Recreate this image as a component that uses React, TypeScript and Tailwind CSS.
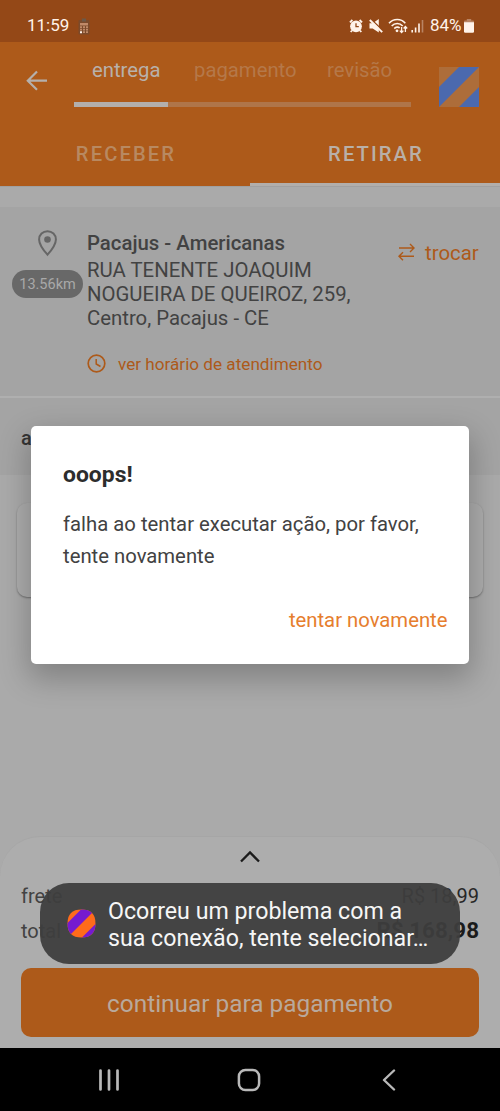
import type { ReactNode } from "react"

function StatusBar() {
  return (
    <div className="flex h-[42px] items-center bg-[#944817] pl-[27px] pr-[26px] pt-[10px] text-[17px] text-[#fff3ea]">
      <span className="w-[42px] whitespace-nowrap">11:59</span>
      <svg className="ml-[9px]" width="12" height="17" viewBox="0 0 12 17" aria-hidden>
        <rect x="0.5" y="2" width="11" height="14.5" rx="1" fill="#7b4a2b" />
        <rect x="4" y="0.5" width="4" height="3" fill="#6b5848" />
        <rect x="2" y="5" width="8" height="2.5" fill="#c08a68" />
        <path d="M2 9.2h2M5 9.2h2M8 9.2h2M2 11.7h2M5 11.7h2M8 11.7h2M5 14.2h2M8 14.2h2" stroke="#c08a68" strokeWidth="1.8" />
        <path d="M2 13.2h2v2H2z" fill="#fff3ea" />
      </svg>

      <div className="ml-auto flex items-center">
        <svg width="14" height="14" viewBox="0 0 14 14" aria-hidden>
          <circle cx="7" cy="7.3" r="5.9" fill="#fff3ea" />
          <path d="M0.9 3.3 3.4 1M13.1 3.3 10.6 1M3 11.5 1.7 13M11 11.5l1.3 1.5" stroke="#fff3ea" strokeWidth="1.8" />
          <path d="M7 4.3v3.4h2.8" fill="none" stroke="#944817" strokeWidth="1.3" />
        </svg>
        <svg className="ml-[6px]" width="14" height="14" viewBox="0 0 14 14" aria-hidden>
          <path d="M0.5 4.3h3.2L9.8 0v13.4L3.7 9.6H0.5z" fill="#fff3ea" />
          <path d="M1.8 0 14 11.8" stroke="#944817" strokeWidth="1.5" />
          <path d="M0.8 1 13.2 13.1" stroke="#fff3ea" strokeWidth="1.9" />
        </svg>
        <svg className="ml-[5px]" width="20" height="16" viewBox="0 0 20 16" aria-hidden>
          <g fill="none" stroke="#fff3ea" strokeWidth="1.6">
            <path d="M1 5.2C5.5.2 13 .2 17.3 5.2" />
            <path d="M3.7 8c3-3.4 8-3.4 11 0" />
            <path d="M6.3 10.6c1.6-1.8 4-1.9 5.4-.6" />
          </g>
          <circle cx="9" cy="12.8" r="1.4" fill="#fff3ea" />
          <path d="M13.6 9v5.5M11.8 12.6l1.8 2 1.8-2M17.4 14V8.5M15.6 10.5l1.8-2 1.8 2" fill="none" stroke="#fff3ea" strokeWidth="1.3" />
        </svg>
        <svg className="ml-[3px]" width="13" height="14" viewBox="0 0 13 14" aria-hidden>
          <path d="M1.2 11v2.5M4.6 8.5v5M8 4.5v9" stroke="#fff3ea" strokeWidth="1.6" />
          <path d="M11.5 1v12.5" stroke="#b98463" strokeWidth="1.6" />
        </svg>
        <span className="ml-[6px] w-[32px] whitespace-nowrap">84%</span>
        <svg className="ml-[2px]" width="10" height="14" viewBox="0 0 10 14" aria-hidden>
          <path d="M2.8 0h4.4v1.4H9a1 1 0 0 1 1 1V4H0V2.4a1 1 0 0 1 1-1h1.8z" fill="#b98463" />
          <path d="M0 3.3h10v9.2a1.2 1.2 0 0 1-1.2 1.2H1.2A1.2 1.2 0 0 1 0 12.5z" fill="#fff3ea" />
        </svg>
      </div>
    </div>
  )
}

function Header() {
  return (
    <header className="h-[144px] bg-[#ad5a1a]">
      <div className="flex h-[80px]">
        <svg className="ml-[26px] mt-[28px]" width="22" height="21" viewBox="0 0 22 21" aria-hidden>
          <path d="M21 10.7H2M11 1.5 1.8 10.7 11 19.8" fill="none" stroke="#b5b0ac" strokeWidth="2.2" />
        </svg>
        <div className="ml-[26px] w-[337px]">
          <div className="flex h-[60px] pt-[16px] text-[20.3px] leading-6 text-[#b57849]">
            <span className="ml-[18px] w-[102px] whitespace-nowrap text-[#b8b1ab]">entrega</span>
            <span className="w-[133px] whitespace-nowrap">pagamento</span>
            <span className="whitespace-nowrap">revisão</span>
          </div>
          <div className="h-[5px] bg-[#af7549]">
            <div className="h-full w-[94px] bg-[#b3afac]" />
          </div>
        </div>
        <svg className="ml-[28px] mt-[25px]" width="40" height="40" viewBox="0 0 40 40" aria-hidden>
          <path d="M0 0h40v40H0z" fill="#ad6d3a" />
          <path d="M20 0h20L0 40V20zM40 20v20H20z" fill="#4b69ae" />
        </svg>
      </div>
      <div className="grid h-[64px] grid-cols-2 text-center text-[20.2px] font-medium leading-[61px] tracking-[2.1px]">
        <span className="pl-[2px] pt-[2px] text-[#b88961]">RECEBER</span>
        <span className="h-[64px] border-b-[3px] border-[#b2aeab] pl-[2px] pt-[2px] text-[#b9b0a8]">RETIRAR</span>
      </div>
    </header>
  )
}

function Store() {
  return (
    <section className="flex h-[189px] bg-[#a4a4a4] text-[#424242]">
      <div className="flex w-[87px] flex-col items-start pl-[12px] pt-[23px]">
        <svg className="ml-[26px]" width="19" height="27" viewBox="0 0 19 27" aria-hidden>
          <path
            d="M9.5 1.2C4.8 1.2 1.1 4.8 1.1 9.4c0 5.8 8.4 15.3 8.4 15.3s8.4-9.500 8.400-15.300c0-4.600-3.700-8.200-8.400-8.200z"
            fill="none"
            stroke="#666"
            strokeWidth="2"
          />
          <circle cx="9.5" cy="9.5" r="3.3" fill="#666" />
        </svg>
        <span className="mt-[13px] flex h-7 w-[71px] items-center justify-center rounded-full bg-[#686868] pt-[2px] text-[14.5px] text-[#a9a9a9]">
          13.56km
        </span>
      </div>
      <div className="w-[300px] whitespace-nowrap pt-[24px] text-[20.35px] leading-6">
        <h2 className="mb-[3px] font-medium">Pacajus - Americanas</h2>
        <p>
          RUA TENENTE JOAQUIM
          <br />
          NOGUEIRA DE QUEIROZ, 259,
          <br />
          Centro, Pacajus - CE
        </p>
        <a className="mt-[22px] flex items-center text-[17.15px] text-[#ad5a1a]">
          <svg className="mb-[2px] mr-[12px]" width="19" height="19" viewBox="0 0 19 19" aria-hidden>
            <circle cx="9.5" cy="9.5" r="8.3" fill="none" stroke="#ad5a1a" strokeWidth="1.7" />
            <path d="M9.2 5v5l4.3 2.5" fill="none" stroke="#ad5a1a" strokeWidth="1.5" />
          </svg>
          ver horário de atendimento
        </a>
      </div>
      <a className="mt-[34px] flex h-6 items-center whitespace-nowrap pl-[11px] text-[20.4px] text-[#ad5a1a]">
        <svg className="mb-[3px] mr-[10px]" width="17" height="18" viewBox="0 0 17 18" aria-hidden>
          <path d="M1 5h15M12 1l4 4-4 4M16 13.2H1M5 9.2l-4 4 4 4" fill="none" stroke="#ad5a1a" strokeWidth="1.4" />
        </svg>
        trocar
      </a>
    </section>
  )
}

function Total({ label, children }: { label: string; children: ReactNode }) {
  return (
    <div className="flex h-[35px] items-center justify-between px-[21px] text-[20px]">
      <span className="text-[#424242]">{label}</span>
      {children}
    </div>
  )
}

function Summary() {
  return (
    <section className="mt-auto h-[212px] rounded-t-[40px] border-t border-[#a6a6a6] bg-[#adadad]">
      <svg className="mx-auto mt-[13px]" width="20" height="13" viewBox="0 0 20 13" aria-hidden>
        <path d="M1 11.5 10 2.5l9 9" fill="none" stroke="#1b1b1b" strokeWidth="2.3" />
      </svg>
      <div className="mt-[15px]">
        <Total label="frete">
          <span className="text-[#272727]">R$ 18,99</span>
        </Total>
        <Total label="total">
          <strong className="text-[22.4px] font-bold text-[#1b1b1b]">R$ 168,98</strong>
        </Total>
      </div>
      <button className="mx-[21px] mt-[20px] block h-[69px] w-[458px] rounded-[10px] bg-[#ad5a1a] pt-[3px] text-[24.4px] text-[#b9a99c]">
        continuar para pagamento
      </button>
    </section>
  )
}

function NavigationBar() {
  return (
    <nav className="flex h-[63px] items-center bg-black" aria-label="Navegação">
      <svg className="ml-[98px]" width="22" height="22" viewBox="0 0 22 22" aria-hidden>
        <path d="M2.5 1.5v19M11 1.5v19M19.5 1.5v19" stroke="#b9b9b9" strokeWidth="2.7" strokeLinecap="round" />
      </svg>
      <svg className="ml-[117px]" width="24" height="24" viewBox="0 0 24 24" aria-hidden>
        <rect x="1.9" y="1.9" width="20.2" height="20.2" rx="6.5" fill="none" stroke="#b9b9b9" strokeWidth="2.5" />
      </svg>
      <svg className="ml-[121px]" width="14" height="22" viewBox="0 0 14 22" aria-hidden>
        <path d="M12 1.5 2 11l10 9.5" fill="none" stroke="#b9b9b9" strokeWidth="2.4" strokeLinecap="round" strokeLinejoin="round" />
      </svg>
    </nav>
  )
}

function ErrorDialog() {
  return (
    <div
      role="dialog"
      className="absolute left-[31px] top-[426px] h-[238px] w-[437.5px] rounded-[5px] bg-white pl-[32px] pr-[32px] pt-[35px] shadow-[0_12px_30px_3px_rgba(0,0,0,0.24)]"
    >
      <h1 className="text-[22.9px] font-bold leading-7 text-[#2d2d2d]">ooops!</h1>
      <p className="mt-[19px] whitespace-nowrap text-[20.3px] leading-8 text-[#424242]">
        falha ao tentar executar ação, por favor,
        <br />
        tente novamente
      </p>
      <button className="-mr-[11px] ml-auto mt-[36px] block text-[20.3px] leading-6 text-[#e67e2e]">tentar novamente</button>
    </div>
  )
}

function Toast() {
  return (
    <div className="absolute left-[40px] top-[883px] flex h-[81px] w-[420px] items-center rounded-[29px] bg-[#3e3e3e]/[0.94] pl-[27px]">
      <svg width="29" height="29" viewBox="0 0 29 29" aria-hidden>
        <clipPath id="badge">
          <path d="M14.5.5C24 .5 28.5 5 28.500 14.500S24 28.500 14.500 28.500.500 24 .500 14.500 5 .500 14.500.500z" />
        </clipPath>
        <g clipPath="url(#badge)">
          <path d="M0 0h29v29H0z" fill="#ff6b1b" />
          <path d="M14.5 0H29L0 29V14.5zM29 14.5V29H14.5z" fill="#751bd0" />
        </g>
      </svg>
      <p className="ml-[12px] whitespace-nowrap pt-[2px] text-[23.2px] leading-[27px] text-[#f6f6f6]">
        Ocorreu um problema com a
        <br />
        sua conexão, tente selecionar…
      </p>
    </div>
  )
}

export default function App() {
  return (
    <main className="relative flex h-[1111px] w-[500px] flex-col overflow-hidden bg-[#aaaaaa] font-['Roboto',sans-serif]">
      <StatusBar />
      <Header />
      <div className="h-[21px] border-t border-[#a0a0a0]" />
      <Store />
      <div className="h-[2px] bg-[#afafaf]" />
      <div className="h-[77px] bg-[#a4a4a4] pl-[21px] pt-[28px] text-[20px] font-medium leading-6 text-[#353535]">a</div>
      <div className="mx-[17px] mt-[28px] h-[94px] rounded-[10px] bg-[#adadad] shadow-[0_1px_2px_rgba(0,0,0,0.35)]" />
      <Summary />
      <NavigationBar />
      <ErrorDialog />
      <Toast />
    </main>
  )
}
